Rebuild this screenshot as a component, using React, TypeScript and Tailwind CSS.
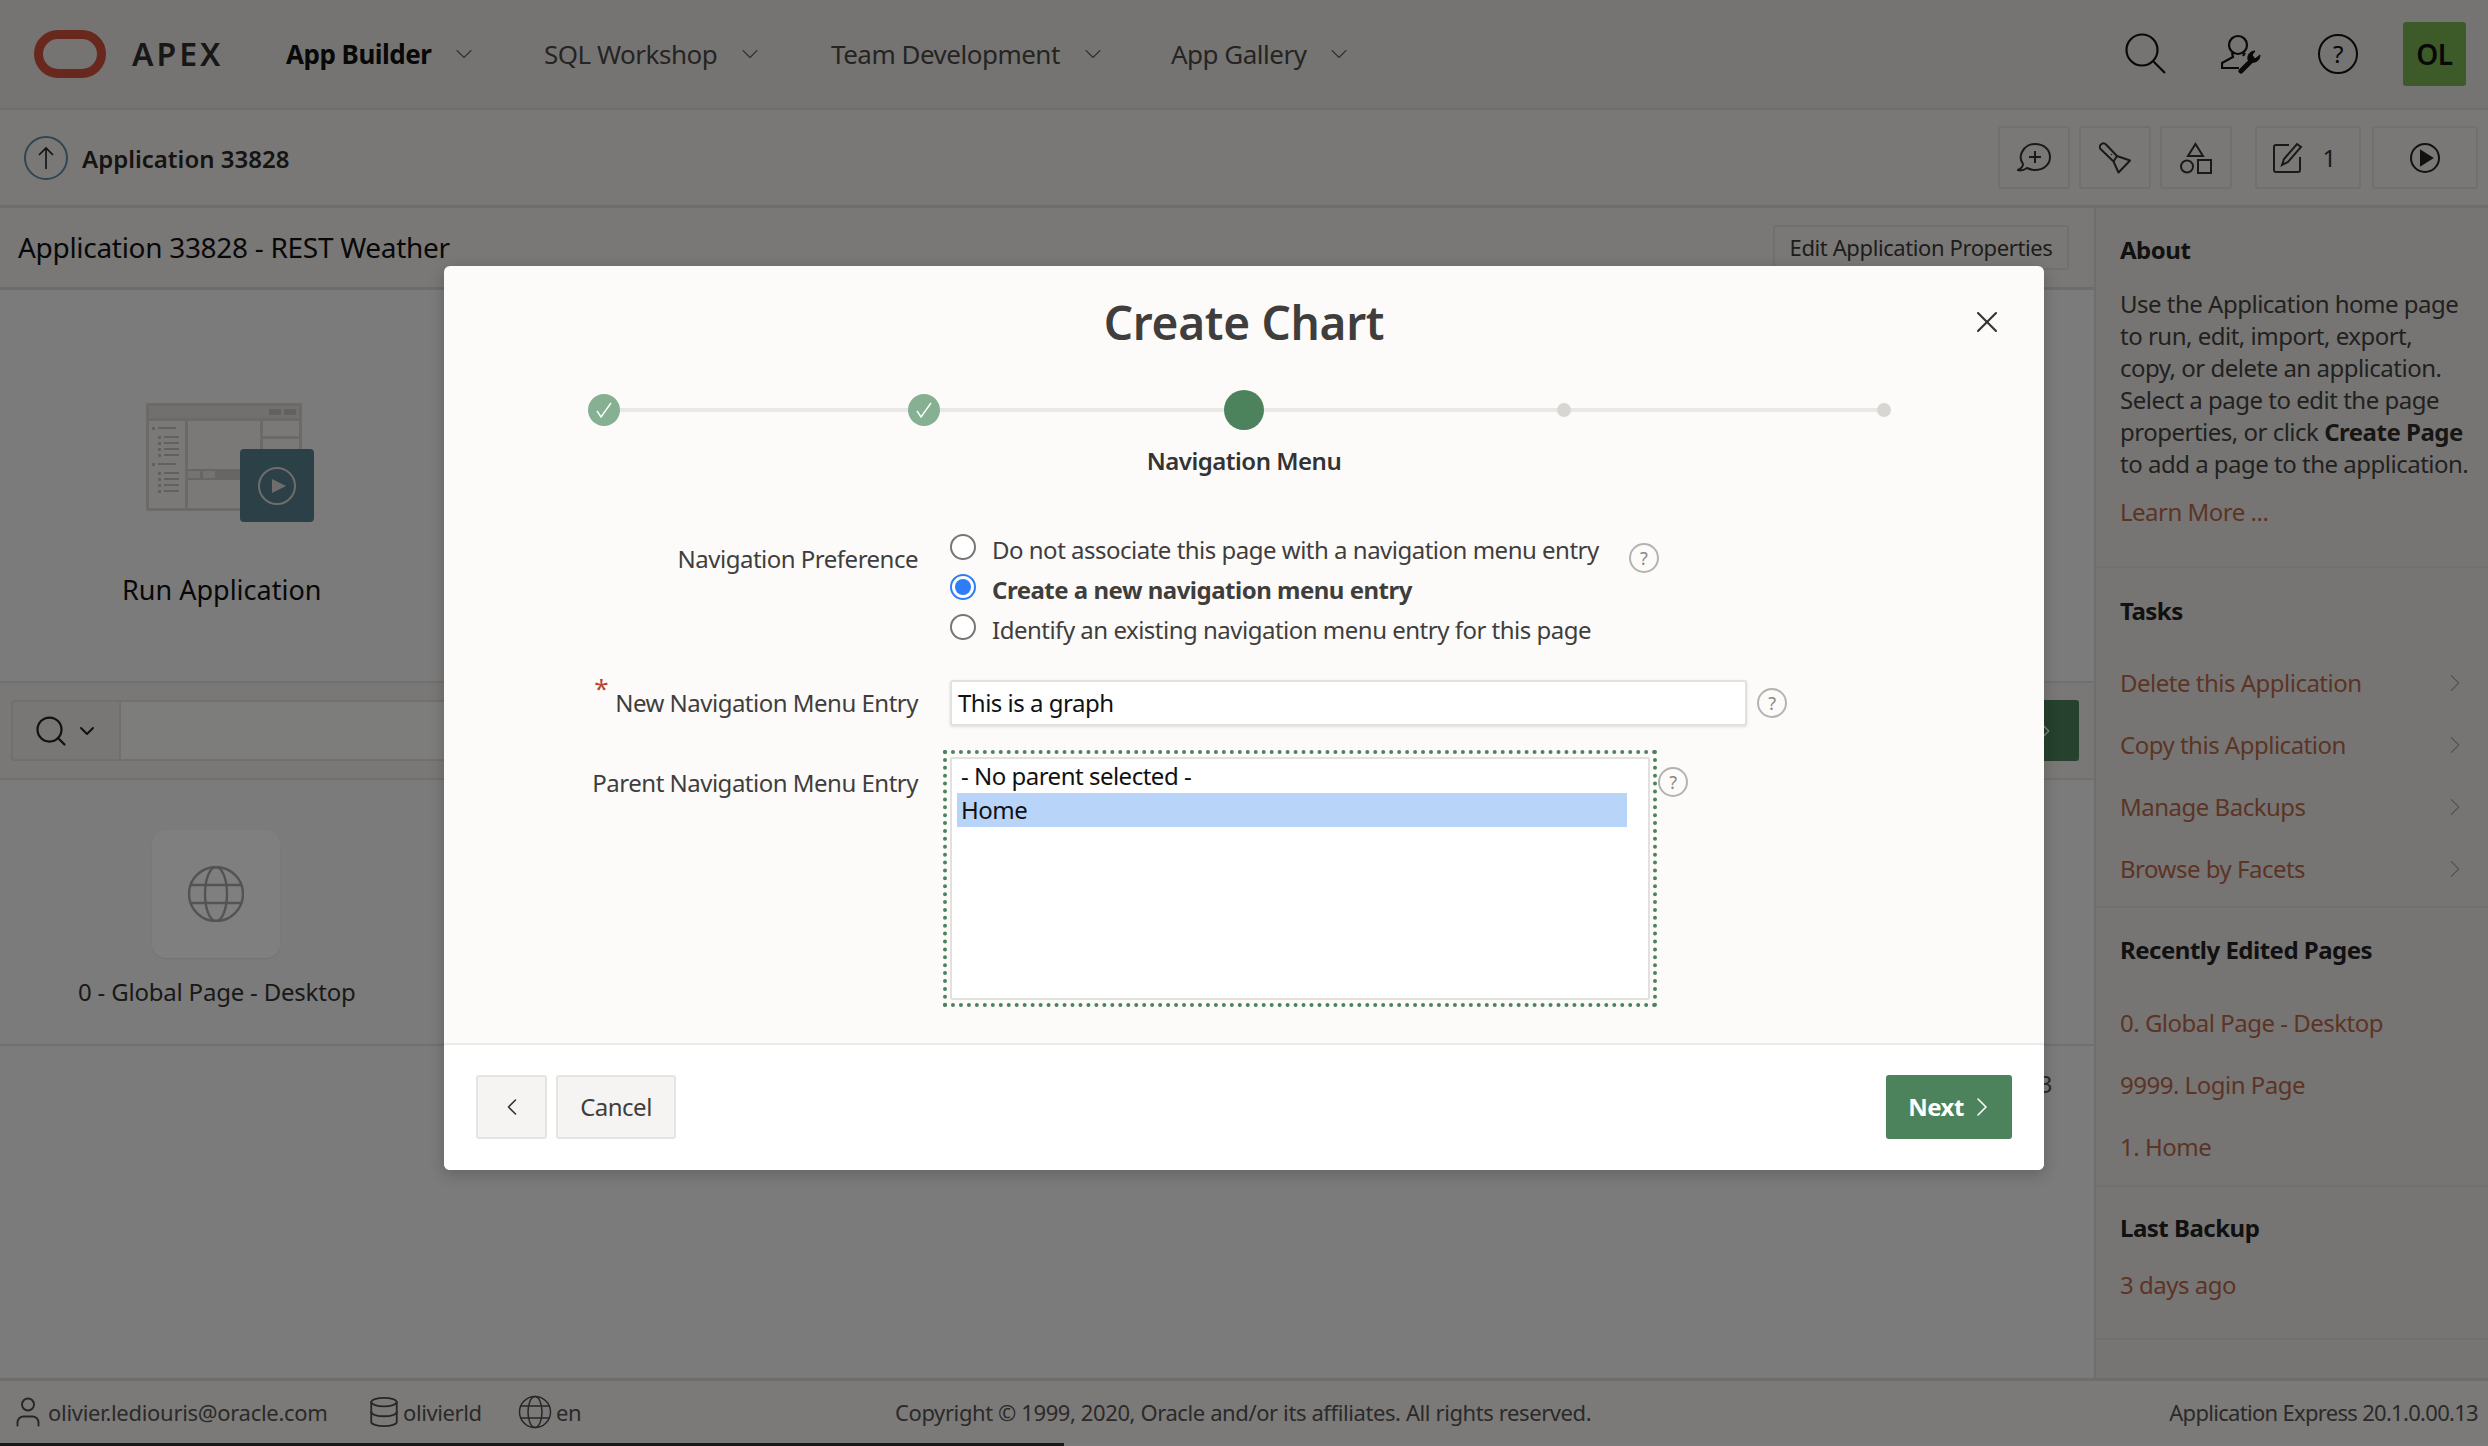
import React from 'react';
import { ChevronDown, ChevronLeft, ChevronRight, Database, Search, User, X } from 'lucide-react';

const NAV = [
  { label: 'App Builder', active: true, width: 'w-[258px]' },
  { label: 'SQL Workshop', active: false, width: 'w-[287px]' },
  { label: 'Team Development', active: false, width: 'w-[340px]' },
  { label: 'App Gallery', active: false, width: 'w-[200px]' },
];

const TASKS = ['Delete this Application', 'Copy this Application', 'Manage Backups', 'Browse by Facets'];
const RECENT = ['0. Global Page - Desktop', '9999. Login Page', '1. Home'];
const LIST_ROWS = [25, 61];
const LIST_SUBROWS = [34, 40, 46, 52, 70, 76, 82, 88];

function HelpDot({ className = '' }: { className?: string }) {
  return (
    <span className={`flex w-[30px] h-[30px] shrink-0 items-center justify-center rounded-full border-2 border-[#b5b3b0] text-[18px] leading-none text-[#8a8886] ${className}`}>
      ?
    </span>
  );
}

function Radio({ checked = false }: { checked?: boolean }) {
  return (
    <span className={`mt-[-6px] flex w-[26px] h-[26px] shrink-0 items-center justify-center rounded-full border-2 bg-white ${checked ? 'border-[#2e7cf6]' : 'border-[#767676]'}`}>
      {checked && <span className="w-[16px] h-[16px] rounded-full bg-[#2e7cf6]" />}
    </span>
  );
}

function DoneStep() {
  return (
    <span className="flex w-[40px] justify-center">
      <span className="flex w-[32px] h-[32px] items-center justify-center rounded-full bg-[#85b092]">
        <svg width="20" height="20" viewBox="0 0 20 20" fill="none" stroke="#fff" strokeWidth="1.4">
          <path d="M3 11l4 6L17 3" />
        </svg>
      </span>
    </span>
  );
}

function TodoStep() {
  return (
    <span className="flex w-[40px] justify-center">
      <span className="h-[14px] w-[14px] rounded-full bg-[#d8d6d3]" />
    </span>
  );
}

function FormLabel({ children, required = false }: { children: React.ReactNode; required?: boolean }) {
  return (
    <span className="relative text-[24px] leading-[32px] text-[#403e3c]">
      {required && <span className="absolute left-[-21px] top-[-14px] text-[26px] text-[#b8442f]">*</span>}
      {children}
    </span>
  );
}

function ToolButton({ children, className = 'w-[72px]' }: { children: React.ReactNode; className?: string }) {
  return (
    <div className={`flex h-[63px] items-center justify-center rounded-[3px] border-2 border-[#e3e1dd] ${className}`}>
      {children}
    </div>
  );
}

function RunIllustration() {
  return (
    <svg width="170" height="120" viewBox="0 0 170 120" className="block">
      <rect x="1.5" y="1.5" width="153" height="105" fill="#f4f3f1" stroke="#d6d4d1" strokeWidth="3" />
      <rect x="3" y="3" width="150" height="13" fill="#e2e0dd" />
      <rect x="0" y="15" width="156" height="3" fill="#d6d4d1" />
      <rect x="123" y="6" width="12" height="6" fill="#c4c2bf" />
      <rect x="138" y="6" width="12" height="6" fill="#c4c2bf" />
      <rect x="39" y="16" width="3" height="90" fill="#d6d4d1" />
      <rect x="114" y="16" width="3" height="50" fill="#d6d4d1" />
      <rect x="116" y="33" width="38" height="3" fill="#d6d4d1" />
      <rect x="42" y="66" width="112" height="11" fill="#cfcdca" />
      <rect x="42" y="68" width="12" height="7" fill="#e8e6e4" />
      <rect x="57" y="68" width="12" height="7" fill="#e8e6e4" />
      {LIST_ROWS.map((y) => (
        <g key={y} fill="#c4c2bf">
          <rect x="6" y={y - 1} width="3" height="3" />
          <rect x="12" y={y - 1} width="18" height="2" />
        </g>
      ))}
      {LIST_SUBROWS.map((y) => (
        <g key={y} fill="#c4c2bf">
          <rect x="12" y={y - 1} width="3" height="3" />
          <rect x="18" y={y - 1} width="15" height="2" />
        </g>
      ))}
      <rect x="94" y="46" width="74" height="73" rx="4" fill="#588190" />
      <circle cx="131" cy="83" r="18" fill="none" stroke="#dddbd8" strokeWidth="2" />
      <path d="M126 76l14 7-14 7z" fill="#dddbd8" />
    </svg>
  );
}

export default function App() {
  return (
    <div className="relative flex h-[1446px] w-[2488px] flex-col overflow-hidden bg-[#f8f7f6] tracking-[-0.5px] text-[#1e1d1c]" style={{ fontFamily: '"Noto Sans", "Open Sans", sans-serif' }}>
      {/* top bar */}
      <header className="flex h-[110px] shrink-0 items-center border-b-2 border-[#dfddd9] bg-[#ebe9e5]">
        <div className="ml-[34px] h-[48px] w-[72px] rounded-[24px] border-[9px] border-[#d2503c]" />
        <span className="ml-[26px] w-[154px] text-[32px] font-semibold tracking-[3px] text-[#312f2d]">APEX</span>
        {NAV.map((item) => (
          <div key={item.label} className={`flex items-center gap-[19px] ${item.width}`}>
            <span className={`text-[26px] ${item.active ? 'font-bold text-[#111]' : 'text-[#4b4947]'}`}>{item.label}</span>
            <ChevronDown size={28} strokeWidth={1} className="text-[#66645f]" />
          </div>
        ))}
        <div className="ml-auto mr-[22px] flex items-center">
          <svg width="42" height="42" viewBox="0 0 42 42" fill="none" stroke="#111" strokeWidth="2.2">
            <circle cx="17" cy="17" r="15.5" />
            <path d="M28 28l12 12" />
          </svg>
          <svg width="42" height="40" viewBox="0 0 42 40" fill="none" stroke="#111" strokeWidth="2.2" className="ml-[54px]">
            <circle cx="17" cy="11" r="9" />
            <path d="M11 19l1 4-11 6v5h17" />
            <path d="M22 22l2-3" />
            <path d="M20 37l11-11" strokeWidth="5" strokeLinecap="round" />
            <path d="M27 26c-1-5 2-9 7-9l-3 4 3 4 5-4c0 5-4 8-8 7z" fill="#111" strokeWidth="1" />
          </svg>
          <span className="ml-[55px] flex h-[40px] w-[40px] items-center justify-center rounded-full border-[2.5px] border-[#111] text-[24px] leading-none text-[#111]">?</span>
          <div className="ml-[45px] flex h-[64px] w-[63px] items-center justify-center rounded-[3px] bg-[#7bb552] text-[28px] font-semibold text-[#111]">OL</div>
        </div>
      </header>

      {/* application toolbar */}
      <div className="flex h-[98px] shrink-0 items-center border-b-[3px] border-[#dcdad6] bg-[#f3f1ef] pl-[24px] pr-[10px]">
        <span className="flex h-[44px] w-[44px] items-center justify-center rounded-full border-2 border-[#5d8ca3]">
          <svg width="20" height="24" viewBox="0 0 20 24" fill="none" stroke="#222" strokeWidth="1.6"><path d="M10 23V2M3 9l7-7 7 7" /></svg>
        </span>
        <span className="ml-[14px] mt-[2px] text-[24px] font-semibold tracking-normal text-[#2a2927]">Application 33828</span>
        <div className="ml-auto flex">
          <div className="flex gap-[9px]">
            <ToolButton>
              <svg width="34" height="30" viewBox="0 0 34 30" fill="none" stroke="#333" strokeWidth="2">
                <path d="M6 21C3 17 3 13 5 9c3-6 9-8 13-8 8 0 15 5 15 13s-7 13-15 13c-3 0-6-1-8-2-3 2-6 3-9 2 2-1 5-3 5-6z" />
                <path d="M18 8v12M12 14h12" />
              </svg>
            </ToolButton>
            <ToolButton>
              <svg width="32" height="32" viewBox="0 0 32 32" fill="none" stroke="#333" strokeWidth="2" strokeLinejoin="round">
                <path d="M1.5 7C0 5 1 3 2.5 2S5.500 1 7 2.500L18 14l13 4.500-11.500 12-5-11z" />
                <path d="M18 14l-3.500 5.500" />
                <circle cx="12.500" cy="12.500" r="0.8" fill="#333" stroke="none" />
              </svg>
            </ToolButton>
            <ToolButton>
              <svg width="32" height="32" viewBox="0 0 32 32" fill="none" stroke="#333" strokeWidth="2">
                <path d="M15.500 2l7.500 12H8L15.500 2z" />
                <circle cx="7" cy="24.500" r="6" />
                <rect x="18" y="18" width="13" height="13" />
              </svg>
            </ToolButton>
          </div>
          <div className="ml-[23px] flex gap-[11px]">
            <ToolButton className="w-[106px] gap-[18px] pr-[8px]">
              <svg width="32" height="32" viewBox="0 0 32 32" fill="none" stroke="#333" strokeWidth="2">
                <path d="M17 3H4a2 2 0 0 0-2 2v23a2 2 0 0 0 2 2h22a2 2 0 0 0 2-2V15" /><path d="M25 2l4 3-13 15-6 3 2-6L25 2z" />
              </svg>
              <span className="text-[24px] text-[#333]">1</span>
            </ToolButton>
            <ToolButton className="w-[106px]">
              <svg width="32" height="32" viewBox="0 0 32 32" fill="none" stroke="#222" strokeWidth="2">
                <circle cx="16" cy="16" r="14" /><path d="M12 9l11 7-11 7V9z" fill="#222" />
              </svg>
            </ToolButton>
          </div>
        </div>
      </div>

      <div className="flex min-h-0 flex-1">
        {/* main column */}
        <main className="flex min-w-0 flex-1 flex-col border-r-2 border-[#dfddd9]">
          <div className="flex h-[82px] shrink-0 items-center justify-between border-b-[3px] border-[#dcdad6] bg-[#f2f0ee] pl-[18px] pr-[25px]">
            <h1 className="mt-[-2px] text-[28px] tracking-[-0.3px] text-[#111]">Application 33828 - REST Weather</h1>
            <div className="flex h-[45px] w-[296px] items-center justify-center rounded-[3px] border-2 border-[#e3e1dd] text-[22px] tracking-[-0.4px] text-[#3d3b39]">Edit Application Properties</div>
          </div>

          <div className="flex h-[393px] shrink-0 flex-col border-b-2 border-[#e3e1dd] pl-[146px] pt-[113px]">
            <RunIllustration />
            <span className="ml-[-24px] mt-[47px] text-[27px] tracking-normal text-[#111]">Run Application</span>
          </div>

          <div className="flex h-[97px] shrink-0 items-center gap-0 border-b-2 border-[#e3e1dd] bg-[#f2f0ee] pl-[11px]">
            <div className="flex h-[61px] w-[110px] items-center justify-center gap-[6px] rounded-l-[3px] border-2 border-[#e3e1dd] bg-[#f0eeeb]">
              <Search size={36} strokeWidth={1.5} className="text-[#222]" />
              <ChevronDown size={24} strokeWidth={2} className="text-[#222]" />
            </div>
            <div className="h-[61px] flex-1 border-y-2 border-[#e3e1dd] bg-[#fbfaf9]" />
            <div className="mr-[15px] flex h-[61px] w-[120px] items-center justify-end rounded-r-[3px] bg-[#4c825c] pr-[22px] text-white">
              <ChevronRight size={22} strokeWidth={1.5} />
            </div>
          </div>

          <div className="flex h-[266px] shrink-0 flex-col border-b-2 border-[#e3e1dd] pl-[78px] pt-[50px]">
            <div className="ml-[74px] flex h-[128px] w-[128px] items-center justify-center rounded-[14px] bg-white shadow-[0_1px_2px_rgba(0,0,0,0.08)]">
              <svg width="56" height="56" viewBox="0 0 56 56" fill="none" stroke="#a8a6a3" strokeWidth="2.4">
                <circle cx="28" cy="28" r="27" /><ellipse cx="28" cy="28" rx="11" ry="27" /><path d="M3 19h50M3 37h50" />
              </svg>
            </div>
            <span className="mt-[16px] text-[24px] tracking-[-0.2px] text-[#333]">0 - Global Page - Desktop</span>
          </div>
          <div className="flex justify-end pr-[42px] pt-[20px] text-[24px] text-[#555]">3</div>
        </main>

        {/* right sidebar */}
        <aside className="flex w-[392px] shrink-0 flex-col bg-[#edebe8]">
          <section className="h-[360px] shrink-0 border-b-2 border-[#e3e1dd] pl-[24px] pt-[26px]">
            <h2 className="text-[24px] font-bold leading-[32px] text-[#222]">About</h2>
            <p className="mt-[22px] whitespace-nowrap text-[24px] leading-[32px] text-[#444240]">
              Use the Application home page<br />
              to run, edit, import, export,<br />
              copy, or delete an application.<br />
              Select a page to edit the page<br />
              properties, or click <b className="font-bold text-[#2e2d2b]">Create Page</b><br />
              to add a page to the application.
            </p>
            <div className="mt-[16px] text-[24px] leading-[32px] text-[#b8684a]">Learn More ...</div>
          </section>
          <section className="h-[340px] shrink-0 border-b-2 border-[#e3e1dd] pl-[24px] pr-[18px] pt-[27px]">
            <h2 className="text-[24px] font-bold leading-[32px] text-[#222]">Tasks</h2>
            <div className="mt-[40px] flex flex-col gap-[30px]">
              {TASKS.map((task) => (
                <div key={task} className="flex items-center justify-between text-[24px] leading-[32px] text-[#b8684a]">
                  <span>{task}</span>
                  <ChevronRight size={30} strokeWidth={0.9} className="text-[#aaa8a5]" />
                </div>
              ))}
            </div>
          </section>
          <section className="h-[279px] shrink-0 border-b-2 border-[#e3e1dd] pl-[24px] pt-[26px]">
            <h2 className="text-[24px] font-bold leading-[32px] text-[#222]">Recently Edited Pages</h2>
            <div className="mt-[41px] flex flex-col gap-[30px]">
              {RECENT.map((page) => (
                <div key={page} className="text-[24px] leading-[32px] text-[#b8684a]">{page}</div>
              ))}
            </div>
          </section>
          <section className="h-[153px] shrink-0 border-b-2 border-[#e3e1dd] pl-[24px] pt-[25px]">
            <h2 className="text-[24px] font-bold leading-[32px] text-[#222]">Last Backup</h2>
            <div className="mt-[25px] text-[24px] leading-[32px] text-[#b8684a]">3 days ago</div>
          </section>
        </aside>
      </div>

      {/* footer */}
      <footer className="flex h-[65px] shrink-0 items-center border-t-[3px] border-[#dcdad6] bg-[#f6f5f3] px-[10px] text-[22px] tracking-[-0.4px] text-[#565452]">
        <User size={36} strokeWidth={1.3} className="mr-[2px] text-[#4f4d4b]" />
        <span className="w-[319px] tracking-[-0.3px]">olivier.lediouris@oracle.com</span>
        <Database size={34} strokeWidth={1.3} className="mr-[2px] text-[#4f4d4b]" />
        <span className="w-[115px]">olivierld</span>
        <svg width="34" height="34" viewBox="0 0 34 34" fill="none" stroke="#4f4d4b" strokeWidth="1.5" className="mr-[4px]">
          <circle cx="17" cy="17" r="15.5" /><ellipse cx="17" cy="17" rx="7" ry="15.5" /><path d="M3 11h28M3 23h28" />
        </svg>
        <span className="w-[339px]">en</span>
        <span>Copyright © 1999, 2020, Oracle and/or its affiliates. All rights reserved.</span>
        <span className="ml-auto tracking-[-0.7px]">Application Express 20.1.0.00.13</span>
      </footer>
      <div className="flex h-[3px] shrink-0"><div className="w-[1064px] bg-[#333]" /></div>

      {/* dialog overlay */}
      <div className="absolute inset-0 bg-black/50" />
      <div className="absolute left-[444px] top-[266px] flex h-[904px] w-[1600px] flex-col overflow-hidden rounded-[6px] bg-[#fcfbfa] shadow-[0_4px_16px_rgba(0,0,0,0.2)]">
        <div className="relative flex-1">
          <h2 className="pt-[24px] text-center text-[46px] font-semibold leading-[64px] tracking-[-0.3px] text-[#403e3c]">Create Chart</h2>
          <X size={36} strokeWidth={1.4} className="absolute right-[39px] top-[38px] text-[#333]" />

          {/* wizard steps */}
          <div className="relative mx-[140px] mt-[36px] flex h-[40px] items-center justify-between">
            <div className="absolute left-[20px] right-[20px] top-[18px] h-[4px] bg-[#e9e8e5]" />
            <div className="relative flex w-full items-center justify-between">
              <DoneStep />
              <DoneStep />
              <span className="h-[40px] w-[40px] rounded-full bg-[#4c825c]" />
              <TodoStep />
              <TodoStep />
            </div>
          </div>
          <div className="mt-[15px] text-center text-[24px] font-semibold leading-[32px] text-[#333]">Navigation Menu</div>

          {/* form */}
          <div className="mt-[57px] grid grid-cols-[474px_1fr] pr-[40px]">
            <div className="pt-[9px] text-right"><FormLabel>Navigation Preference</FormLabel></div>
            <div className="ml-[32px] flex flex-col gap-[8px]">
              <div className="flex h-[32px] items-center">
                <Radio />
                <span className="ml-[16px] text-[24px] leading-[32px] text-[#403e3c]">Do not associate this page with a navigation menu entry</span>
                <HelpDot className="ml-[30px] mt-[16px]" />
              </div>
              <div className="flex h-[32px] items-center">
                <Radio checked />
                <span className="ml-[16px] text-[24px] font-bold leading-[32px] text-[#403e3c]">Create a new navigation menu entry</span>
              </div>
              <div className="flex h-[32px] items-center">
                <Radio />
                <span className="ml-[16px] text-[24px] leading-[32px] text-[#403e3c]">Identify an existing navigation menu entry for this page</span>
              </div>
            </div>

            <div className="mt-[34px] pt-[7px] text-right"><FormLabel required>New Navigation Menu Entry</FormLabel></div>
            <div className="ml-[32px] mt-[34px] flex items-center">
              <div className="flex h-[46px] w-[797px] items-center rounded-[3px] border-2 border-[#e3e1dd] bg-white px-[6px] text-[24px] text-[#111] shadow-[0_1px_3px_rgba(0,0,0,0.12)]">This is a graph</div>
              <HelpDot className="ml-[10px]" />
            </div>

            <div className="mt-[24px] pt-[17px] text-right"><FormLabel>Parent Navigation Menu Entry</FormLabel></div>
            <div className="ml-[25px] mt-[24px] flex items-start">
              <div className="h-[257px] w-[714px] border-[4px] border-dotted border-[#4c825c] p-[3px]">
                <div className="h-full rounded-[2px] border-2 border-[#e3e1dd] bg-white pl-[5px] pr-[21px] text-[24px] leading-[34px] text-[#111]">
                  <div className="pl-[4px]">- No parent selected -</div>
                  <div className="bg-[#b9d4f9] pl-[4px]">Home</div>
                </div>
              </div>
              <HelpDot className="ml-[1px] mt-[17px]" />
            </div>
          </div>
        </div>

        {/* dialog buttons */}
        <div className="flex h-[127px] shrink-0 items-center border-t-[2px] border-[#ecebe8] bg-white px-[32px] pb-[2px]">
          <div className="flex h-[64px] w-[71px] items-center justify-center rounded-[3px] border-2 border-[#e6e4e1] bg-[#f5f4f2] text-[#333]">
            <ChevronLeft size={28} strokeWidth={1.4} />
          </div>
          <div className="ml-[9px] flex h-[64px] w-[120px] items-center justify-center rounded-[3px] border-2 border-[#e6e4e1] bg-[#f5f4f2] text-[24px] text-[#403e3c]">Cancel</div>
          <div className="ml-auto flex h-[64px] w-[126px] items-center justify-center gap-[2px] rounded-[3px] bg-[#4c825c] pl-[8px] text-[24px] font-bold text-white">
            Next
            <ChevronRight size={32} strokeWidth={1.2} />
          </div>
        </div>
      </div>
    </div>
  );
}
